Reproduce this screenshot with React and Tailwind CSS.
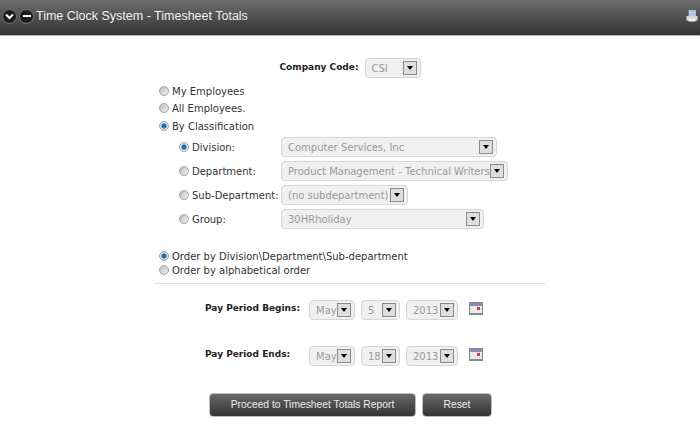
import React from 'react';

function Radio({ checked }) {
  return (
    <span
      className={`block w-[10px] h-[10px] shrink-0 rounded-full border border-[#a5a5a5] ${
        checked
          ? 'bg-[radial-gradient(circle,#1f5fa8_0%,#2f75bd_38%,#dfe6ee_55%,#c4c4c4_100%)]'
          : 'bg-[linear-gradient(135deg,#bdbdbd,#f2f2f2)]'
      }`}
    />
  );
}

function Select({ width, text }) {
  return (
    <div
      style={{ width }}
      className="h-[20px] flex items-center justify-between shrink-0 rounded-[4px] border border-[#d6d6d6] bg-[#f0f0f0] pl-[6px] pr-[3px]"
    >
      <span className="text-[10px] text-[#999] whitespace-nowrap">{text}</span>
      <span className="w-[14px] h-[14px] flex items-center justify-center shrink-0 border border-[#8a8a8a] bg-[#dedede]">
        <span className="w-0 h-0 border-x-[3px] border-x-transparent border-t-[4px] border-t-black" />
      </span>
    </div>
  );
}

function ClassRow({ checked, label, width, text }) {
  return (
    <div className="flex items-center h-[20px]">
      <Radio checked={checked} />
      <span className="w-[92px] pl-[3px] text-[10px] text-[#333] whitespace-nowrap">{label}</span>
      <Select width={width} text={text} />
    </div>
  );
}

function RadioLine({ checked, label, className }) {
  return (
    <div className={`flex items-center gap-[3px] h-[14px] text-[10px] text-[#333] ${className}`}>
      <Radio checked={checked} />
      <span>{label}</span>
    </div>
  );
}

function CalendarIcon() {
  return (
    <svg width="14" height="13" viewBox="0 0 14 13" className="shrink-0 -mt-[4px]">
      <rect x="0.5" y="0.5" width="13" height="12" fill="#ece8ea" stroke="#85859a" />
      <rect x="1" y="1" width="12" height="3" fill="#8a8caf" />
      <rect x="8" y="5" width="3" height="3" fill="#c8414f" />
      <rect x="1" y="11" width="12" height="1" fill="#8c8c8c" />
    </svg>
  );
}

function PayRow({ label, day, className }) {
  return (
    <div className={`flex items-center h-[20px] ${className}`}>
      <span className="w-[104px] -mt-[3px] text-[9px] font-bold text-[#222] whitespace-nowrap">{label}</span>
      <Select width="46px" text="May" />
      <div className="w-[6px]" />
      <Select width="39px" text={day} />
      <div className="w-[6px]" />
      <Select width="52px" text="2013" />
      <div className="w-[11px]" />
      <CalendarIcon />
    </div>
  );
}

function Button({ width, children }) {
  return (
    <button
      style={{ width }}
      className="h-[24px] rounded-[4px] border border-[#bdbdbd] bg-gradient-to-b from-[#6a6a6a] to-[#333333] font-['Liberation_Sans',sans-serif] text-[10.3px] text-[#e8eef2]"
    >
      {children}
    </button>
  );
}

export default function App() {
  return (
    <div className="w-[700px] h-[440px] overflow-hidden bg-white font-['DejaVu_Sans',sans-serif]">
      <div className="h-[36px] flex items-center justify-between px-[2px] pb-[3px] border-b border-[#b5b5b5] bg-gradient-to-b from-[#6e6e6e] to-[#333333]">
        <div className="flex items-center">
          <span className="w-[15px] h-[15px] rounded-full bg-[#1c1c1c] border border-[#777] flex items-center justify-center">
            <svg width="9" height="7" viewBox="0 0 9 7">
              <path d="M1 1.5l3.5 3.5 3.5-3.5" fill="none" stroke="#fff" strokeWidth="2" />
            </svg>
          </span>
          <span className="ml-[2px] w-[15px] h-[15px] rounded-full bg-[#1c1c1c] border border-[#777] flex items-center justify-center">
            <span className="block w-[8px] h-[2px] bg-white" />
          </span>
          <span className="ml-[2px] font-['Liberation_Sans',sans-serif] text-[12.5px] text-[#f0f0f0]">
            Time Clock System - Timesheet Totals
          </span>
        </div>
        <svg width="12" height="12" viewBox="0 0 12 12">
          <rect x="3" y="0.5" width="6.5" height="6" fill="#a9c6ee" stroke="#d7e3f5" strokeWidth="0.5" />
          <rect x="0.5" y="6" width="11" height="4.5" fill="#d9d9d9" />
          <rect x="2.5" y="9" width="7" height="2.5" fill="#f4f4f4" />
        </svg>
      </div>

      <div className="flex items-center justify-center h-[20px] mt-[22px] gap-[6px]">
        <span className="text-[9px] font-bold text-[#222]">Company Code:</span>
        <Select width="56px" text="CSI" />
      </div>

      <div className="ml-[159px] mt-[6px]">
        <RadioLine label="My Employees" />
        <RadioLine label="All Employees." className="mt-[3px]" />
        <RadioLine checked label="By Classification" className="mt-[4px]" />
      </div>

      <div className="ml-[179px] mt-[4px] flex flex-col gap-[4px]">
        <ClassRow checked label="Division:" width="216px" text="Computer Services, Inc" />
        <ClassRow label="Department:" width="227px" text="Product Management - Technical Writers" />
        <ClassRow label="Sub-Department:" width="127px" text="(no subdepartment)" />
        <ClassRow label="Group:" width="203px" text="30HRholiday" />
      </div>

      <div className="ml-[159px] mt-[20px]">
        <RadioLine checked label="Order by Division\Department\Sub-department" />
        <RadioLine label="Order by alphabetical order" />
      </div>

      <div className="ml-[155px] mt-[6px] w-[390px] border-t border-[#dcdcdc]" />

      <PayRow label="Pay Period Begins:" day="5" className="ml-[205px] mt-[16px]" />
      <PayRow label="Pay Period Ends:" day="18" className="ml-[205px] mt-[26px]" />

      <div className="ml-[209px] mt-[27px] flex gap-[6px]">
        <Button width="207px">Proceed to Timesheet Totals Report</Button>
        <Button width="70px">Reset</Button>
      </div>
    </div>
  );
}
